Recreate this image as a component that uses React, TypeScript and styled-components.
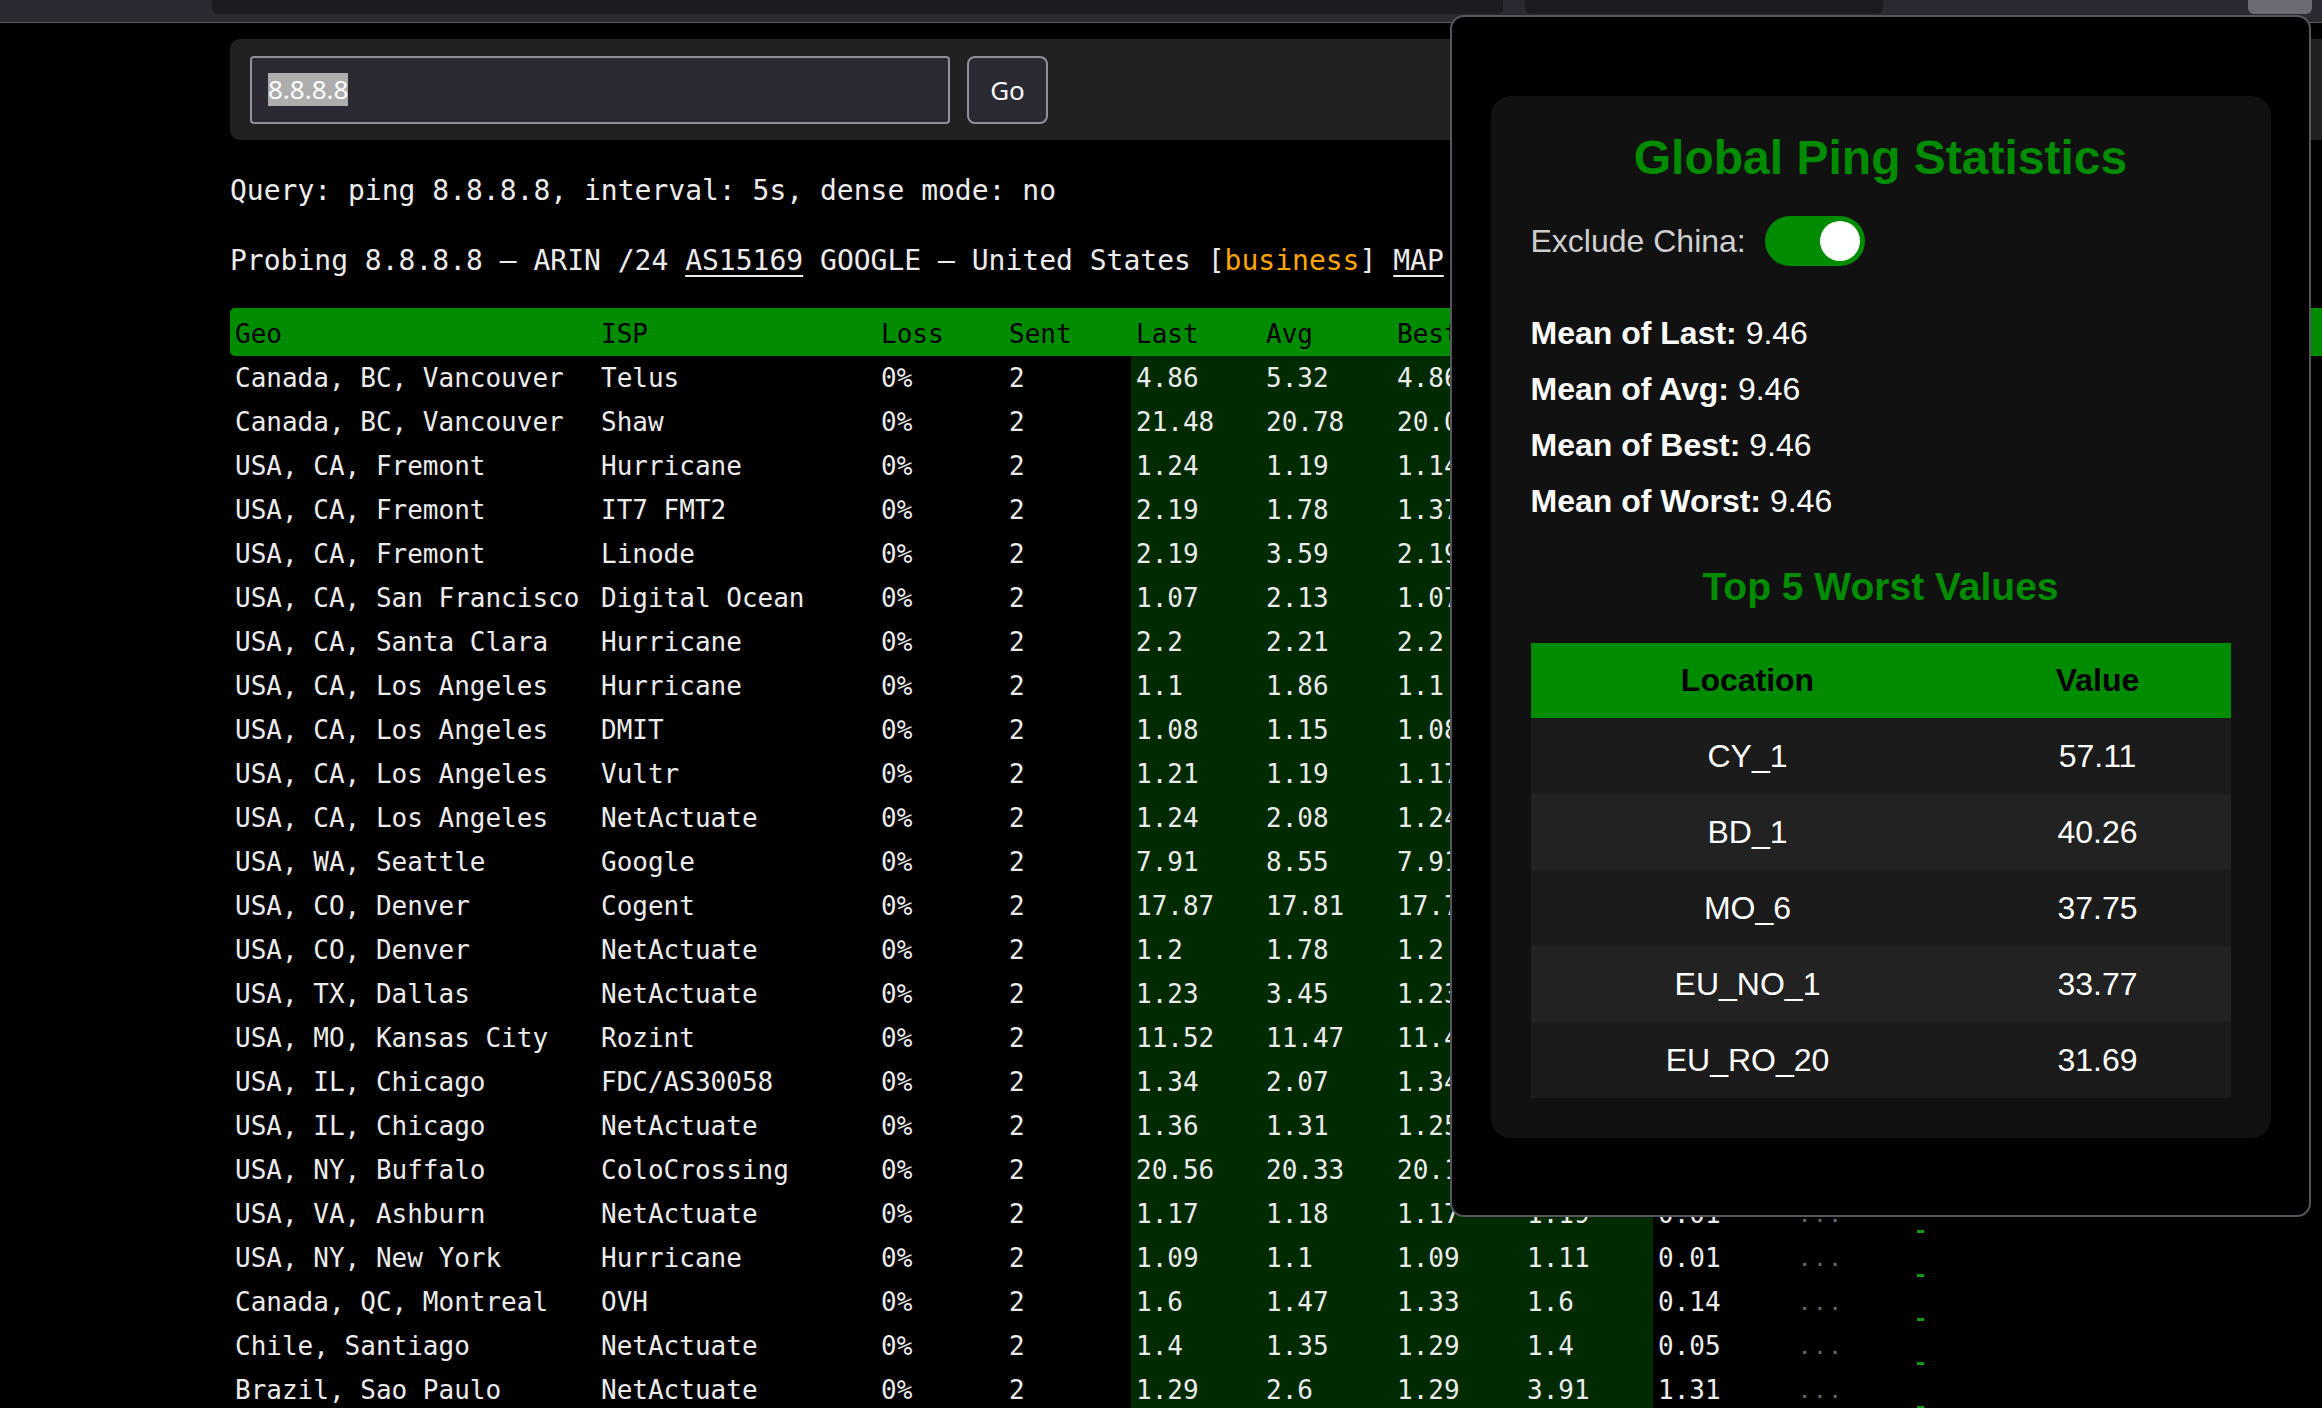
import styled, { createGlobalStyle } from "styled-components";

const GlobalStyle = createGlobalStyle`
  html, body {
    margin: 0;
    padding: 0;
    background: #000;
    overflow: hidden;
  }
  body {
    font-family: "DejaVu Sans Mono", "Liberation Mono", monospace;
    color: #ececec;
  }
`;

const Page = styled.div`
  position: relative;
  width: 2322px;
  height: 1408px;
  overflow: hidden;
  background: #000;
`;

const BrowserBar = styled.div`
  display: flex;
  height: 22px;
  background: #2b2a33;
  border-bottom: 1px solid #5b5b66;
`;

const BarTab = styled.div<{ $width: number; $offset: number; $light?: boolean }>`
  flex: 0 0 ${(p) => p.$width}px;
  margin-left: ${(p) => p.$offset}px;
  height: 14px;
  background: ${(p) => (p.$light ? "#6c6b75" : "#1c1b22")};
  border-radius: 0 0 6px 6px;
`;

const Main = styled.main`
  width: 2200px;
  padding: 16px 0 0 230px;
`;

const SearchPanel = styled.form`
  display: flex;
  align-items: center;
  gap: 17px;
  height: 101px;
  box-sizing: border-box;
  padding: 0 20px;
  background: #212121;
  border-radius: 10px;
`;

const SearchField = styled.div`
  display: flex;
  align-items: center;
  width: 700px;
  height: 68px;
  box-sizing: border-box;
  padding: 0 16px;
  border: 2px solid #8f8f9d;
  border-radius: 4px;
  background: #2b2a33;
  font-family: "Noto Sans", sans-serif;
  font-size: 26px;
  color: #fff;
`;

const Selected = styled.span`
  background: #adadad;
  line-height: 33px;
`;

const GoButton = styled.button`
  width: 81px;
  height: 68px;
  box-sizing: border-box;
  border: 2px solid #8f8f9d;
  border-radius: 8px;
  background: #2b2a33;
  color: #fbfbfe;
  font-family: "Noto Sans", sans-serif;
  font-size: 26px;
  padding: 0;
`;

const InfoLine = styled.p<{ $gap: number }>`
  margin: ${(p) => p.$gap}px 0 0;
  font-size: 28px;
  line-height: 32px;
  white-space: pre;
  color: #ececec;
`;

const InfoLink = styled.a`
  color: inherit;
  text-decoration: underline;
  text-underline-offset: 5px;
  text-decoration-thickness: 2px;
`;

const Tag = styled.span`
  color: #ffa500;
`;

const PingTable = styled.table`
  margin-top: 31px;
  width: 2200px;
  table-layout: fixed;
  border-collapse: separate;
  border-spacing: 0;
  font-size: 26px;
`;

const HeadCell = styled.th`
  height: 48px;
  box-sizing: border-box;
  padding: 5px 5px 0;
  line-height: 43px;
  background: #008c00;
  color: #000;
  font-weight: normal;
  text-align: left;
  white-space: nowrap;
  overflow: hidden;

  &:first-child {
    border-radius: 5px 0 0 5px;
  }
`;

const Cell = styled.td<{ $metric?: boolean }>`
  height: 44px;
  padding: 0 5px;
  line-height: 44px;
  white-space: nowrap;
  overflow: hidden;
  color: #ececec;
  background: ${(p) => (p.$metric ? "#002a00" : "transparent")};
`;

const DotsCell = styled.td`
  padding: 0 5px;
  font-size: 22px;
  color: #6a6a6a;
  letter-spacing: 2px;
  vertical-align: middle;
`;

const ChartCell = styled.td`
  padding: 0 0 3px 9px;
  vertical-align: bottom;
  line-height: 0;
`;

const SparkBar = styled.span`
  display: inline-block;
  width: 7px;
  height: 3px;
  background: #0a9a0a;
`;

const Overlay = styled.section`
  position: absolute;
  left: 1450px;
  top: 15px;
  width: 861px;
  height: 1202px;
  box-sizing: border-box;
  border: 2px solid #57565f;
  border-radius: 14px;
  background: #000;
  display: flex;
  flex-direction: column;
  align-items: center;
  padding-top: 79px;
`;

const StatsCard = styled.div`
  width: 780px;
  box-sizing: border-box;
  padding: 34px 40px 40px;
  background: #111;
  border-radius: 20px;
  font-family: "Liberation Sans", Arial, sans-serif;
  color: #fff;
`;

const CardTitle = styled.h2`
  margin: 0;
  font-size: 48px;
  line-height: 56px;
  font-weight: bold;
  text-align: center;
  color: #008c00;
`;

const ToggleRow = styled.div`
  display: flex;
  align-items: center;
  gap: 19px;
  height: 50px;
  margin-top: 30px;
`;

const ToggleLabel = styled.span`
  font-size: 32px;
  color: #cfcfcf;
`;

const Switch = styled.div<{ $on: boolean }>`
  display: flex;
  justify-content: ${(p) => (p.$on ? "flex-end" : "flex-start")};
  align-items: center;
  width: 100px;
  height: 50px;
  box-sizing: border-box;
  padding: 0 5px;
  border-radius: 25px;
  background: ${(p) => (p.$on ? "#008c00" : "#555")};
`;

const Knob = styled.span`
  width: 40px;
  height: 40px;
  border-radius: 50%;
  background: #fff;
`;

const StatList = styled.div`
  display: flex;
  flex-direction: column;
  gap: 19px;
  margin-top: 49px;
`;

const StatLine = styled.div`
  font-size: 32px;
  line-height: 37px;

  b {
    font-weight: bold;
  }
`;

const SubTitle = styled.h3`
  margin: 44px 0 0;
  font-size: 39px;
  line-height: 45px;
  font-weight: bold;
  text-align: center;
  color: #008c00;
`;

const WorstTable = styled.table`
  margin-top: 34px;
  width: 100%;
  table-layout: fixed;
  border-collapse: collapse;
  font-size: 32px;
`;

const WorstHead = styled.th<{ $width: string }>`
  width: ${(p) => p.$width};
  height: 75px;
  padding: 0;
  background: #008c00;
  color: #000;
  font-weight: bold;
  text-align: center;
`;

const WorstRow = styled.tr`
  background: #1b1b1b;

  &:nth-child(even) {
    background: #222;
  }
`;

const WorstCell = styled.td`
  height: 76px;
  padding: 0;
  text-align: center;
  color: #fff;
`;

type Probe = {
  geo: string;
  isp: string;
  last: string;
  avg: string;
  best: string;
  worst: string;
  stdev: string;
};

const probes: Probe[] = [
  { geo: "Canada, BC, Vancouver", isp: "Telus", last: "4.86", avg: "5.32", best: "4.86", worst: "5.78", stdev: "0.46" },
  { geo: "Canada, BC, Vancouver", isp: "Shaw", last: "21.48", avg: "20.78", best: "20.08", worst: "21.48", stdev: "0.7" },
  { geo: "USA, CA, Fremont", isp: "Hurricane", last: "1.24", avg: "1.19", best: "1.14", worst: "1.24", stdev: "0.05" },
  { geo: "USA, CA, Fremont", isp: "IT7 FMT2", last: "2.19", avg: "1.78", best: "1.37", worst: "2.19", stdev: "0.41" },
  { geo: "USA, CA, Fremont", isp: "Linode", last: "2.19", avg: "3.59", best: "2.19", worst: "4.99", stdev: "1.4" },
  { geo: "USA, CA, San Francisco", isp: "Digital Ocean", last: "1.07", avg: "2.13", best: "1.07", worst: "3.19", stdev: "1.06" },
  { geo: "USA, CA, Santa Clara", isp: "Hurricane", last: "2.2", avg: "2.21", best: "2.2", worst: "2.22", stdev: "0.01" },
  { geo: "USA, CA, Los Angeles", isp: "Hurricane", last: "1.1", avg: "1.86", best: "1.1", worst: "2.62", stdev: "0.76" },
  { geo: "USA, CA, Los Angeles", isp: "DMIT", last: "1.08", avg: "1.15", best: "1.08", worst: "1.22", stdev: "0.07" },
  { geo: "USA, CA, Los Angeles", isp: "Vultr", last: "1.21", avg: "1.19", best: "1.17", worst: "1.21", stdev: "0.02" },
  { geo: "USA, CA, Los Angeles", isp: "NetActuate", last: "1.24", avg: "2.08", best: "1.24", worst: "2.92", stdev: "0.84" },
  { geo: "USA, WA, Seattle", isp: "Google", last: "7.91", avg: "8.55", best: "7.91", worst: "9.19", stdev: "0.64" },
  { geo: "USA, CO, Denver", isp: "Cogent", last: "17.87", avg: "17.81", best: "17.75", worst: "17.87", stdev: "0.06" },
  { geo: "USA, CO, Denver", isp: "NetActuate", last: "1.2", avg: "1.78", best: "1.2", worst: "2.36", stdev: "0.58" },
  { geo: "USA, TX, Dallas", isp: "NetActuate", last: "1.23", avg: "3.45", best: "1.23", worst: "5.67", stdev: "2.22" },
  { geo: "USA, MO, Kansas City", isp: "Rozint", last: "11.52", avg: "11.47", best: "11.42", worst: "11.52", stdev: "0.05" },
  { geo: "USA, IL, Chicago", isp: "FDC/AS30058", last: "1.34", avg: "2.07", best: "1.34", worst: "2.8", stdev: "0.73" },
  { geo: "USA, IL, Chicago", isp: "NetActuate", last: "1.36", avg: "1.31", best: "1.25", worst: "1.36", stdev: "0.05" },
  { geo: "USA, NY, Buffalo", isp: "ColoCrossing", last: "20.56", avg: "20.33", best: "20.1", worst: "20.56", stdev: "0.23" },
  { geo: "USA, VA, Ashburn", isp: "NetActuate", last: "1.17", avg: "1.18", best: "1.17", worst: "1.19", stdev: "0.01" },
  { geo: "USA, NY, New York", isp: "Hurricane", last: "1.09", avg: "1.1", best: "1.09", worst: "1.11", stdev: "0.01" },
  { geo: "Canada, QC, Montreal", isp: "OVH", last: "1.6", avg: "1.47", best: "1.33", worst: "1.6", stdev: "0.14" },
  { geo: "Chile, Santiago", isp: "NetActuate", last: "1.4", avg: "1.35", best: "1.29", worst: "1.4", stdev: "0.05" },
  { geo: "Brazil, Sao Paulo", isp: "NetActuate", last: "1.29", avg: "2.6", best: "1.29", worst: "3.91", stdev: "1.31" },
];

const worst = [
  { location: "CY_1", value: "57.11" },
  { location: "BD_1", value: "40.26" },
  { location: "MO_6", value: "37.75" },
  { location: "EU_NO_1", value: "33.77" },
  { location: "EU_RO_20", value: "31.69" },
];

const columns = [366, 280, 128, 127, 130, 131, 130, 131, 140, 115, 522];
const headers = ["Geo", "ISP", "Loss", "Sent", "Last", "Avg", "Best", "Worst", "StDev", "", "Chart"];

export default function App() {
  return (
    <Page>
      <GlobalStyle />
      <BrowserBar>
        <BarTab $offset={212} $width={1291} />
        <BarTab $offset={22} $width={358} />
        <BarTab $offset={365} $width={64} $light />
      </BrowserBar>

      <Main>
        <SearchPanel onSubmit={(e) => e.preventDefault()}>
          <SearchField>
            <Selected>8.8.8.8</Selected>
          </SearchField>
          <GoButton type="submit">Go</GoButton>
        </SearchPanel>

        <InfoLine $gap={35}>Query: ping 8.8.8.8, interval: 5s, dense mode: no</InfoLine>
        <InfoLine $gap={38}>
          Probing 8.8.8.8 — ARIN /24 <InfoLink href="#">AS15169</InfoLink> GOOGLE — United States [
          <Tag>business</Tag>] <InfoLink href="#">MAP</InfoLink>
        </InfoLine>

        <PingTable>
          <colgroup>
            {columns.map((w, i) => (
              <col key={i} style={{ width: w }} />
            ))}
          </colgroup>
          <thead>
            <tr>
              {headers.map((h, i) => (
                <HeadCell key={i}>{h}</HeadCell>
              ))}
            </tr>
          </thead>
          <tbody>
            {probes.map((p, i) => (
              <tr key={i}>
                <Cell>{p.geo}</Cell>
                <Cell>{p.isp}</Cell>
                <Cell>0%</Cell>
                <Cell>2</Cell>
                <Cell $metric>{p.last}</Cell>
                <Cell $metric>{p.avg}</Cell>
                <Cell $metric>{p.best}</Cell>
                <Cell $metric>{p.worst}</Cell>
                <Cell>{p.stdev}</Cell>
                <DotsCell>...</DotsCell>
                <ChartCell>
                  <SparkBar />
                </ChartCell>
              </tr>
            ))}
          </tbody>
        </PingTable>
      </Main>

      <Overlay>
        <StatsCard>
          <CardTitle>Global Ping Statistics</CardTitle>
          <ToggleRow>
            <ToggleLabel>Exclude China:</ToggleLabel>
            <Switch $on role="switch" aria-checked="true">
              <Knob />
            </Switch>
          </ToggleRow>
          <StatList>
            <StatLine><b>Mean of Last:</b> 9.46</StatLine>
            <StatLine><b>Mean of Avg:</b> 9.46</StatLine>
            <StatLine><b>Mean of Best:</b> 9.46</StatLine>
            <StatLine><b>Mean of Worst:</b> 9.46</StatLine>
          </StatList>
          <SubTitle>Top 5 Worst Values</SubTitle>
          <WorstTable>
            <thead>
              <tr>
                <WorstHead $width="62%">Location</WorstHead>
                <WorstHead $width="38%">Value</WorstHead>
              </tr>
            </thead>
            <tbody>
              {worst.map((w) => (
                <WorstRow key={w.location}>
                  <WorstCell>{w.location}</WorstCell>
                  <WorstCell>{w.value}</WorstCell>
                </WorstRow>
              ))}
            </tbody>
          </WorstTable>
        </StatsCard>
      </Overlay>
    </Page>
  );
}
